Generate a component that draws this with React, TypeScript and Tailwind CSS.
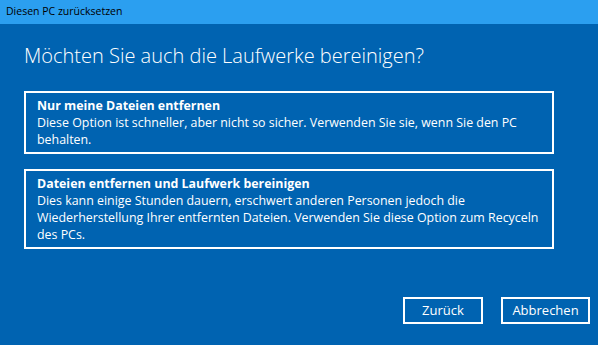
export default function App() {
  return (
    <div className="w-[598px] h-[345px] flex flex-col bg-[#0063b1] font-['Open_Sans',sans-serif] text-white overflow-hidden">
      <div className="h-[24px] flex-shrink-0 bg-[#2b9ff0] px-[6px] flex items-center text-[10.5px] text-black">
        Diesen PC zurücksetzen
      </div>

      <div className="flex-1 flex flex-col px-[24px]">
        <h1 className="mt-[18px] text-[20px] leading-[28px] font-light">
          Möchten Sie auch die Laufwerke bereinigen?
        </h1>

        <div className="mt-[21px] flex flex-col gap-[15px] w-[530px]">
          <div className="border-2 border-white px-[11px] py-[4px] text-[12.4px] leading-[17px]">
            <p className="font-bold">Nur meine Dateien entfernen</p>
            <p>Diese Option ist schneller, aber nicht so sicher. Verwenden Sie sie, wenn Sie den PC behalten.</p>
          </div>
          <div className="border-2 border-white px-[11px] py-[4px] text-[12.4px] leading-[17px]">
            <p className="font-bold">Dateien entfernen und Laufwerk bereinigen</p>
            <p>
              Dies kann einige Stunden dauern, erschwert anderen Personen jedoch die Wiederherstellung Ihrer
              entfernten Dateien. Verwenden Sie diese Option zum Recyceln des PCs.
            </p>
          </div>
        </div>

        <div className="flex-1" />

        <div className="flex justify-end gap-[18px] -mr-[16px] mb-[21px] text-[13px]">
          <button className="w-[80px] h-[27px] border-2 border-white">Zurück</button>
          <button className="w-[89px] h-[27px] border-2 border-white">Abbrechen</button>
        </div>
      </div>
    </div>
  );
}
